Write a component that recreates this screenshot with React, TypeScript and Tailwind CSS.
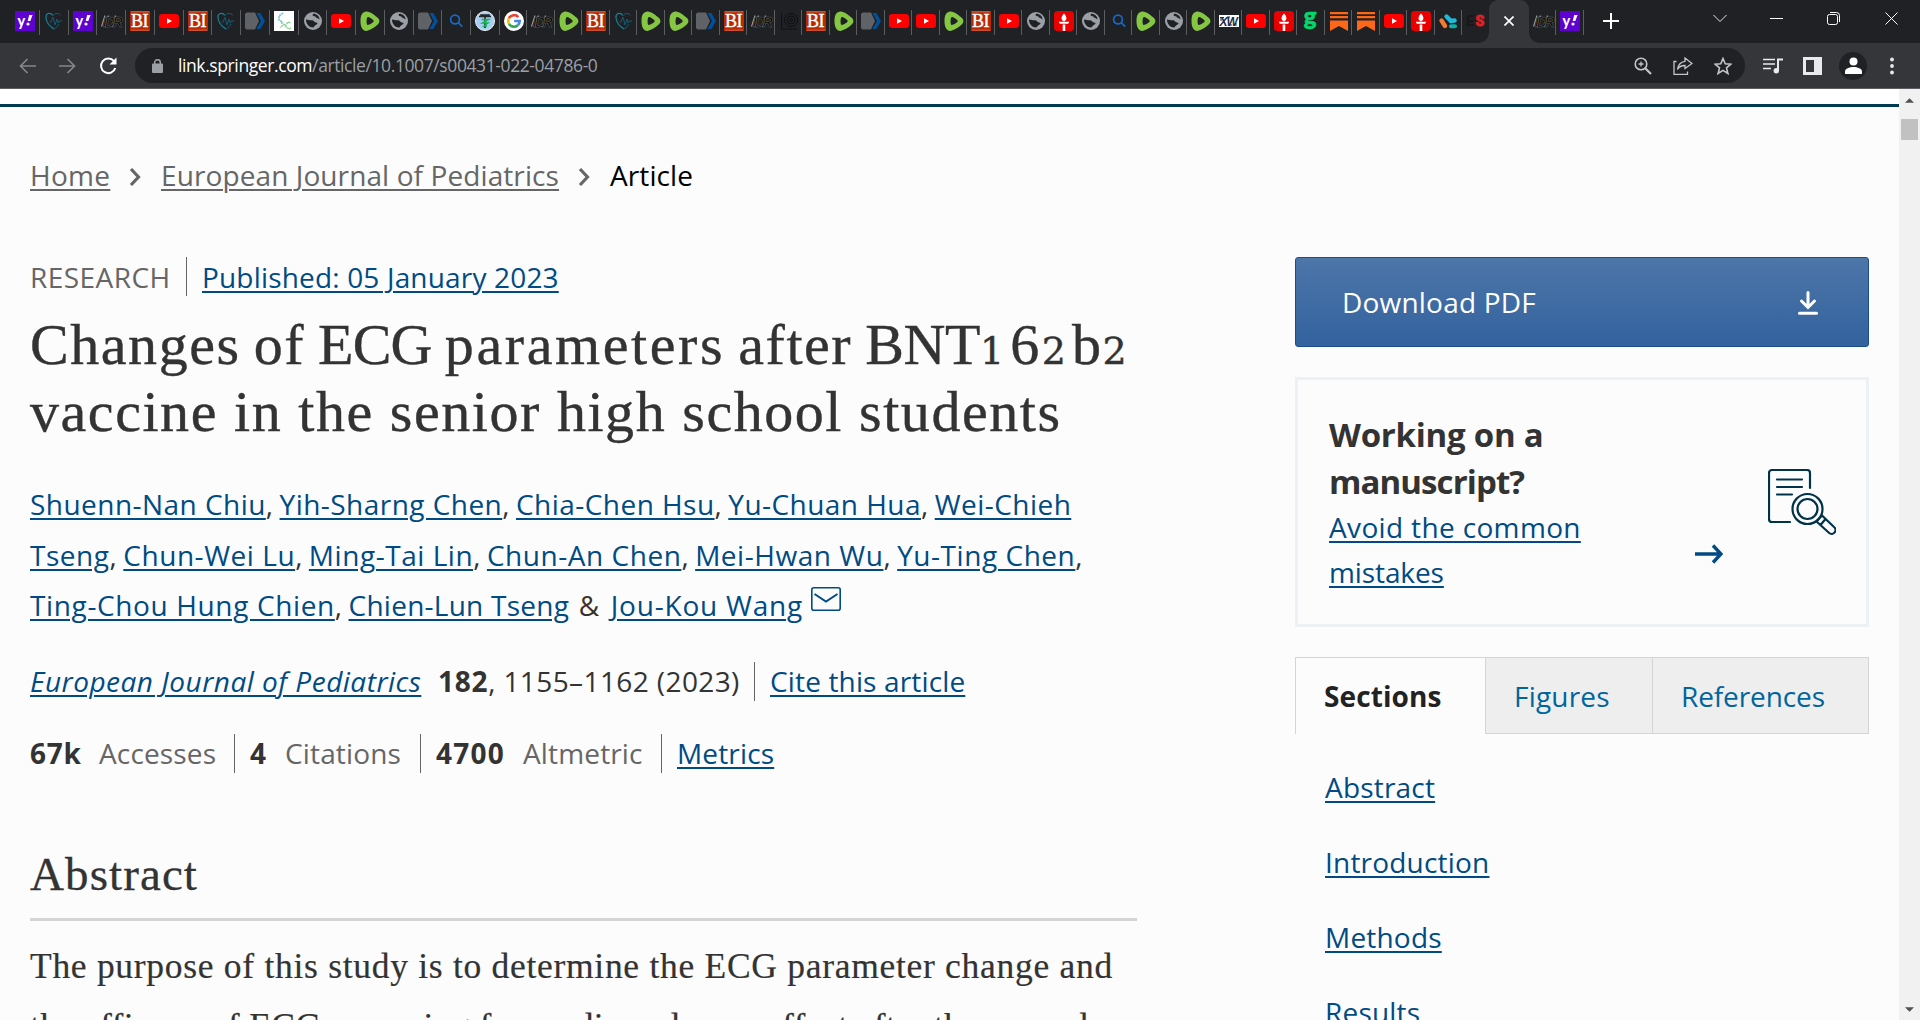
import type { ReactNode } from "react";

type TabIcon =
  | "yahoo" | "heart" | "idr" | "bi" | "youtube" | "tag" | "molecule" | "globe"
  | "rumble" | "search" | "medical" | "google" | "spiral" | "torch" | "jw"
  | "g" | "substack" | "blocks" | "es";

const wideTabs: TabIcon[] = [
  "yahoo", "heart", "yahoo", "idr", "bi", "youtube", "bi", "heart", "tag",
  "molecule", "globe", "youtube", "rumble", "globe", "tag", "search", "medical",
];

const narrowTabs: TabIcon[] = [
  "google", "idr", "rumble", "bi", "heart", "rumble", "rumble", "tag", "bi",
  "idr", "spiral", "bi", "rumble", "tag", "youtube", "youtube", "rumble", "bi",
  "youtube", "globe", "torch", "globe", "search", "rumble", "globe", "rumble",
  "jw", "youtube", "torch", "g", "substack", "substack", "youtube", "torch", "blocks",
];

const authorLines = [
  {
    names: ["Shuenn-Nan Chiu", "Yih-Sharng Chen", "Chia-Chen Hsu", "Yu-Chuan Hua", "Wei-Chieh"],
    tracking: "tracking-[0.46px]",
    end: "",
  },
  {
    names: ["Tseng", "Chun-Wei Lu", "Ming-Tai Lin", "Chun-An Chen", "Mei-Hwan Wu", "Yu-Ting Chen"],
    tracking: "tracking-[0.54px]",
    end: ",",
  },
];

const sections = ["Abstract", "Introduction", "Methods", "Results"];

const icons: Record<TabIcon, ReactNode> = {
  yahoo: (
    <>
      <rect width="20" height="20" fill="#5f01d1" />
      <text x="2.5" y="14.5" fontSize="14.5" fontWeight="900" fontFamily="Lato, sans-serif" fill="#fff">y</text>
      <path d="M14.2 4h3.4l-2.3 6h-2.6z" fill="#fff" />
      <circle cx="13" cy="13" r="1.6" fill="#fff" />
    </>
  ),
  heart: (
    <g fill="none" stroke="#125c74" strokeWidth="1">
      <path d="M9 4.5C6 .5 1.5 2.5 2 7c.4 4.5 4 8.5 8 11" stroke="#1a8099" strokeWidth="1.2" />
      <path d="M9 4.5C11 2 15 1.5 16.5 4.5M10 18c2-1 4-3 5-5" />
      <path d="M5.500 11h1.500l2-5 2 8 2-6 1.200 4 1-2H18" />
    </g>
  ),
  idr: (
    <>
      <path d="M4 4.500L.5 15.500M7.500 4.500L4 15.500M14.500 4.500L11.500 15.500" stroke="#9a9a9a" strokeWidth="1.1" />
      <text x="2" y="15.5" fontSize="14" fontWeight="900" fontStyle="italic" letterSpacing="-2.2" fontFamily="Liberation Sans, sans-serif" fill="#050505" stroke="#6b6b6b" strokeWidth="0.5">IDR</text>
    </>
  ),
  bi: (
    <>
      <rect width="20" height="20" fill="#b92a02" />
      <path d="M1 .8h18M1 19.2h18" stroke="#df7b61" strokeWidth="0.7" />
      <text x="1" y="16" fontSize="18" letterSpacing="-0.4" fontFamily="Liberation Serif, serif" fill="#fff" stroke="#fff" strokeWidth="0.4">BI</text>
    </>
  ),
  youtube: (
    <>
      <rect y="3" width="20" height="14" rx="3.2" fill="#f00" />
      <path d="M8 7.2v5.6l5-2.8z" fill="#fff" />
    </>
  ),
  tag: (
    <>
      <path d="M1.500 1.500h8.500l4 8.500-4 8.500H1.500L0 17V3z" fill="#5f6368" />
      <path d="M11.500 2h3.800l4.700 8-4.700 8h-3.800l4.500-8z" fill="#01509b" />
    </>
  ),
  molecule: (
    <>
      <rect width="20" height="20" fill="#fff" />
      <g fill="none" strokeWidth="1.6" strokeDasharray="2 0.6">
        <path d="M9 2L5 5v4l4 2.500" stroke="#6fc6d6" />
        <path d="M7 11.500l3 2-4 3M11 15l3-4 3 1M11 15l4 3 2-1" stroke="#8ed49a" />
      </g>
    </>
  ),
  globe: (
    <>
      <circle cx="10" cy="10" r="9" fill="#9aa0a6" />
      <path d="M3 8.500c2.500 0 3.500 1 6 .8 2 0 2 2.300 4 2.200 1.500 0 2 .8 1 1.800-1.200 1-2.500 1-3.500 3.200-4 .2-7.500-3.300-7.500-8z" fill="#202124" />
      <path d="M10 2.800c-1 1.300 0 2.500 1.500 2.500 1.400 0 1.200 1.800 2.800 1.800l2.200 1.400C16.500 5.500 14 2.800 10 2.800z" fill="#202124" />
    </>
  ),
  rumble: (
    <>
      <path d="M6 .5c3-.8 9 3.500 12 6.500 2 2 1.800 4.500 0 6.300-3 3-8 6-11.500 6.600C2.500 20 .5 16 .5 10S2 1.500 6 .5z" fill="#85c742" />
      <path d="M7.500 6.200c1-.6 5 2 5.800 3 .5.700.5 1.200 0 1.800-.8 1-4.500 3.300-5.800 2.900-1.200-.5-1.200-7 0-7.700z" fill="#202124" />
    </>
  ),
  search: (
    <g fill="none" stroke="#1769c4" strokeWidth="1.7">
      <circle cx="9" cy="8.500" r="4.400" />
      <path d="M12.200 11.700l4 4" />
    </g>
  ),
  medical: (
    <>
      <circle cx="10" cy="10" r="9.500" fill="#a7cdf4" stroke="#f0f0f0" />
      <path d="M4 5.500h12M6 5V4h8v1M10 5v12" stroke="#262626" strokeWidth="1.7" fill="none" />
      <path d="M6.500 8.500h7l-6 3.500h5.500l-4 3h3" stroke="#12b552" strokeWidth="1.5" fill="none" />
    </>
  ),
  google: (
    <>
      <circle cx="10" cy="10" r="10" fill="#fff" />
      <g fill="none" strokeWidth="2.6">
        <path d="M14.300 6.100A5.700 5.700 0 0 0 5 7.200" stroke="#ea4335" />
        <path d="M5 7.200a5.700 5.700 0 0 0 0 5.600" stroke="#fbbc05" />
        <path d="M5 12.800a5.700 5.700 0 0 0 8.800 1.400" stroke="#34a853" />
        <path d="M13.800 14.200a5.700 5.700 0 0 0 1.900-4.200H10.200" stroke="#4285f4" />
      </g>
    </>
  ),
  spiral: (
    <g fill="none" stroke="#101012" strokeWidth="1">
      <path d="M2.500 2v16H18" />
      <circle cx="12" cy="9" r="6.500" />
      <circle cx="12" cy="9" r="4" />
      <circle cx="12" cy="9" r="1.500" />
    </g>
  ),
  torch: (
    <>
      <rect width="20" height="20" rx="3.500" fill="#e90000" />
      <path d="M10 2.500c3.300 3.500 3.300 6.500 0 8-3.300-1.500-3.300-4.500 0-8zM4.800 10.800h10.400l-1 2H5.800zM8.700 13.500h2.600V20H8.700z" fill="#fff" />
    </>
  ),
  jw: (
    <>
      <rect y="4" width="20" height="12" fill="#fff" />
      <text x="0.5" y="14.5" fontSize="12" fontWeight="900" fontStyle="italic" letterSpacing="-1" fontFamily="Liberation Sans, sans-serif" fill="#14304d">XW</text>
      <path d="M1 6.500h4M8 6h3M2 7v3M12 13v2M17 12v3" stroke="#14304d" strokeWidth="1" />
    </>
  ),
  g: (
    <text x="2.8" y="14" fontSize="24" fontWeight="900" fontFamily="Lato, sans-serif" fill="#02d76d" stroke="#02d76d" strokeWidth="0.6">g</text>
  ),
  substack: (
    <path d="M1 1h18v2.300H1zM1 5h18v2.300H1zM1 9.500h18V20l-9-5-9 5z" fill="#fd6719" />
  ),
  blocks: (
    <g strokeWidth="4.4" strokeLinecap="round">
      <path d="M2.500 9.500l3.500 5.500" stroke="#f37a32" />
      <path d="M7.500 5.500l4.500 4.500" stroke="#22b8d8" />
      <path d="M12 10l3.500-.5" stroke="#22b8d8" />
      <path d="M12 15.200h4" stroke="#09b1a9" strokeWidth="4" />
    </g>
  ),
  es: (
    <>
      <text x="0" y="15" fontSize="14" fontWeight="900" fontFamily="Roboto, sans-serif" fill="#1a1718">E</text>
      <text x="9.5" y="15" fontSize="14" fontWeight="900" fontFamily="Roboto, sans-serif" fill="#de2128" stroke="#de2128" strokeWidth="0.8">S</text>
    </>
  ),
};

function Favicon({ name }: { name: TabIcon }) {
  return (
    <svg viewBox="0 0 20 20" className="size-5 shrink-0 overflow-visible">
      {icons[name]}
    </svg>
  );
}

function Tab({ name, className }: { name: TabIcon; className: string }) {
  return (
    <div className={`flex items-center pl-1 pb-px h-[43px] shrink-0 ${className}`}>
      <Favicon name={name} />
      <span className="ml-auto h-[25px] w-px bg-[#5c5d60] mt-0.5" />
    </div>
  );
}

function TabStrip() {
  return (
    <div className="flex h-[43px] bg-[#202124] pl-[11px] leading-none">
      {wideTabs.map((t, i) => (
        <Tab key={i} name={t} className="w-[28.75px]" />
      ))}
      {narrowTabs.map((t, i) => (
        <Tab key={i} name={t} className="w-[27.5px]" />
      ))}
      <div className="flex items-center pl-1 pb-px w-[27px] shrink-0">
        <Favicon name="es" />
      </div>
      {/* active tab */}
      <div className="relative flex items-center justify-center w-10 shrink-0 rounded-t-[9px] bg-[#35363a]">
        <span className="absolute -left-2.5 bottom-0 size-2.5 bg-[radial-gradient(circle_at_0_0,#202124_9.5px,#35363a_10px)]" />
        <span className="absolute -right-2.5 bottom-0 size-2.5 bg-[radial-gradient(circle_at_100%_0,#202124_9.5px,#35363a_10px)]" />
        <svg viewBox="0 0 10 10" className="size-[10px] mb-px">
          <path d="M.5.5l9 9M9.500.5l-9 9" stroke="#fff" strokeWidth="1.7" />
        </svg>
      </div>
      <Tab name="idr" className="w-[27px]" />
      <Tab name="yahoo" className="w-7" />
      <svg viewBox="0 0 16 16" className="size-4 ml-[19px] mt-[13px]">
        <path d="M8 0v16M0 8h16" stroke="#fff" strokeWidth="2" />
      </svg>
      <div className="ml-auto flex items-start pr-[22px]">
        <svg viewBox="0 0 14 14" className="size-3.5 mt-3 mr-[43px]">
          <path d="M.5 3l6.500 6.500L13.500 3" fill="none" stroke="#e8e8e8" />
        </svg>
        <span className="w-[13px] h-px bg-white mt-[18px] mr-11" />
        <svg viewBox="0 0 13 13" className="size-[13px] mt-3 mr-[45px]" fill="none" stroke="#fff">
          <rect x=".5" y="2.500" width="10" height="10" rx="2" />
          <path d="M3 .5h6.500a3 3 0 0 1 3 3V10" />
        </svg>
        <svg viewBox="0 0 13 13" className="size-[13px] mt-3">
          <path d="M.5.5l12 12M12.500.5l-12 12" stroke="#fff" />
        </svg>
      </div>
    </div>
  );
}

function Toolbar() {
  return (
    <div className="flex items-center h-[46px] bg-[#35363a] border-b border-[#5d5e61] pl-[19px] pr-[21px]">
      <svg viewBox="0 0 17 16" className="w-[17px] h-4 mr-[23px]" fill="none" stroke="#85868a" strokeWidth="1.7">
        <path d="M17 8H1.500M8.500 1l-7 7 7 7" />
      </svg>
      <svg viewBox="0 0 17 16" className="w-[17px] h-4 mr-[23px]" fill="none" stroke="#85868a" strokeWidth="1.7">
        <path d="M0 8h15.500M8.500 1l7 7-7 7" />
      </svg>
      <svg viewBox="0 0 18 18" className="size-[18px]">
        <path d="M15 4.200A7.300 7.300 0 1 0 16.300 11" fill="none" stroke="#fff" strokeWidth="2" />
        <path d="M17.500.5v7h-7z" fill="#fff" />
      </svg>
      <div className="flex items-center ml-[18px] w-[1610px] h-[35px] rounded-full bg-[#202124] pl-[17px] pr-[13px]">
        <svg viewBox="0 0 11 14" className="w-[11px] h-3.5 mr-[15px]">
          <rect y="4.500" width="11" height="9.500" rx="1" fill="#9aa0a6" />
          <path d="M2.700 5V3.500a2.800 2.800 0 0 1 5.600 0V5" fill="none" stroke="#9aa0a6" strokeWidth="1.5" />
        </svg>
        <span className="text-[17.5px] leading-[35px] tracking-[-0.4px] text-[#9aa0a6] whitespace-nowrap">
          <span className="text-white">link.springer.com</span>/article/10.1007/s00431-022-04786-0
        </span>
        <div className="ml-auto flex items-center">
          <svg viewBox="0 0 18 18" className="size-[18px] mr-[21px]" fill="none" stroke="#c4c5c8" strokeWidth="1.6">
            <circle cx="7" cy="7" r="5.800" />
            <path d="M11.500 11.500l5.500 5.500" strokeWidth="2.2" />
            <path d="M7 4.500v5M4.500 7h5" strokeWidth="1.3" />
          </svg>
          <svg viewBox="0 0 20 18" className="w-5 h-[18px] mr-[21px]" fill="none" stroke="#c4c5c8" strokeWidth="1.3">
            <path d="M3.500 4.500H1v13h13.500v-3" />
            <path d="M12 1l7 5.500-7 5V8.500c-4 0-6 1-7.500 4C5 7.500 7.500 5 12 4.300z" />
          </svg>
          <svg viewBox="0 0 18 18" className="size-[18px]">
            <path d="M9 1.500l2.200 5.300 5.700.4-4.400 3.700 1.400 5.600L9 13.400l-4.900 3.100 1.400-5.600L1.100 7.200l5.700-.4z" fill="none" stroke="#c4c5c8" strokeWidth="1.6" />
          </svg>
        </div>
      </div>
      <svg viewBox="0 0 20 16" className="w-5 h-4 ml-[18px]">
        <path d="M0 1.500h12M0 6h12M0 10.500h8" stroke="#e8eaed" strokeWidth="1.6" />
        <path d="M15 13V1.500h5" stroke="#e8eaed" strokeWidth="2" fill="none" />
        <circle cx="13.300" cy="12.800" r="2.700" fill="#e8eaed" />
      </svg>
      <svg viewBox="0 0 19 18" className="w-[19px] h-[18px] ml-5">
        <path fillRule="evenodd" d="M0 0h19v18H0zM3 3v12h8V3z" fill="#e8eaed" />
      </svg>
      <div className="ml-[17px] size-7 rounded-full bg-[#202124] flex items-center justify-center">
        <svg viewBox="0 0 17 17" className="size-[17px]" fill="#fff">
          <circle cx="8.500" cy="4.500" r="4" />
          <path d="M0 17v-2.500C0 11.500 4.500 10 8.500 10s8.500 1.500 8.500 4.500V17z" />
        </svg>
      </div>
      <svg viewBox="0 0 4 18" className="w-1 h-[18px] ml-[23px]" fill="#e8eaed">
        <circle cx="2" cy="2.500" r="1.900" />
        <circle cx="2" cy="9" r="1.900" />
        <circle cx="2" cy="15.500" r="1.900" />
      </svg>
    </div>
  );
}

function Link({ children, className = "" }: { children: ReactNode; className?: string }) {
  return (
    <a className={`text-[#004b83] underline decoration-2 underline-offset-[3px] ${className}`}>{children}</a>
  );
}

function Chevron() {
  return (
    <svg viewBox="0 0 12 20" className="w-3 h-5 mt-1 mr-0.5">
      <path d="M2 2l7.500 8L2 18" fill="none" stroke="#666" strokeWidth="3.2" />
    </svg>
  );
}

function Divider() {
  return <span className="w-px h-[39px] bg-[#666]" />;
}

// old-style figure sitting at x-height
function LowDigit({ children }: { children: ReactNode }) {
  return <span className="font-['DejaVu_Serif',serif] text-[38px] leading-none tracking-[6px]">{children}</span>;
}

function Article() {
  return (
    <div className="w-[1107px] shrink-0">
      <nav className="mt-[49px] flex items-center h-[38px] text-[#666] tracking-[0.1px] whitespace-nowrap">
        <span className="w-20 underline decoration-2 underline-offset-[3px] tracking-[0.3px]">Home</span>
        <span className="w-[51px] flex justify-center"><Chevron /></span>
        <span className="w-[398px] underline decoration-2 underline-offset-[3px]">European Journal of Pediatrics</span>
        <span className="w-[51px] flex justify-center"><Chevron /></span>
        <span className="text-black">Article</span>
      </nav>

      <div className="mt-[63px] flex items-center h-[39px] tracking-[0.17px]">
        <span className="w-[156px] text-[#666] tracking-[0.45px]">RESEARCH</span>
        <Divider />
        <Link className="ml-[15px]">Published: 05 January 2023</Link>
      </div>

      <h1 className="mt-[15px] font-['Liberation_Serif',serif] text-[58px] leading-[67px] text-[#333] tracking-[1.55px] whitespace-nowrap [-webkit-text-stroke:0.4px_#333]">
        <span className="[word-spacing:-3px]">
          Changes of <span className="tracking-[-0.8px]">ECG</span>{" "}
          <span className="tracking-[2.6px]">parameters</span> after{" "}
          <span className="tracking-[-0.4px]">BNT</span>
          <LowDigit>1</LowDigit>
          <span className="tracking-[2.5px]">6</span>
          <LowDigit>2</LowDigit>b<LowDigit>2</LowDigit>
        </span>
        <br />
        vaccine in the senior high school students
      </h1>

      <div className="mt-[34px] leading-[50.5px] text-[#333] tracking-[-0.4px] whitespace-nowrap">
        {authorLines.map((line) => (
          <div key={line.names[0]}>
            {line.names.map((n, i) => (
              <span key={n}>
                {i > 0 && ", "}
                <Link className={line.tracking}>{n}</Link>
              </span>
            ))}
            {line.end}
          </div>
        ))}
        <div className="flex">
          <span>
            <Link className="tracking-[0.63px]">Ting-Chou Hung Chien</Link>,{" "}
            <Link className="tracking-[0.25px]">Chien-Lun Tseng</Link>
            <span className="tracking-[2.2px]"> &amp; </span>
            <Link className="tracking-[0.8px]">Jou-Kou Wang</Link>
          </span>
          <svg viewBox="0 0 30 24" className="w-[30px] h-6 ml-2 mt-[7px]" fill="none" stroke="#004b83">
            <rect x=".8" y=".8" width="28.400" height="22.400" rx="2" strokeWidth="1.6" />
            <path d="M3.500 7L15 14.500 26.500 7" strokeWidth="2" />
          </svg>
        </div>
      </div>

      <div className="mt-[31px] flex items-center h-[39px] text-[#333] tracking-[0.4px] whitespace-nowrap">
        <span className="w-[408px]"><Link className="italic tracking-[0.5px]">European Journal of Pediatrics</Link></span>
        <span className="w-[316px]"><b className="tracking-[0.7px]">182</b>, 1155–1162 (2023)</span>
        <Divider />
        <Link className="ml-[15px] tracking-[0.15px]">Cite this article</Link>
      </div>

      <div className="mt-[33px] flex items-center h-[39px] text-[#666] tracking-[0.15px]">
        <b className="w-[69px] text-[#333] tracking-[0.7px]">67k</b>
        <span className="w-[135px]">Accesses</span>
        <Divider />
        <b className="ml-[15px] w-[35px] text-[#333]">4</b>
        <span className="w-[135px]">Citations</span>
        <Divider />
        <b className="ml-[15px] w-[87px] text-[#333] tracking-[1.2px]">4700</b>
        <span className="w-[138px]">Altmetric</span>
        <Divider />
        <Link className="ml-[15px]">Metrics</Link>
      </div>

      <h2 className="mt-[73px] pb-4 border-b-[3px] border-[#d5d5d5] font-['Liberation_Serif',serif] text-[47px] leading-[56px] tracking-[1.1px] text-[#333] [-webkit-text-stroke:0.3px_#333]">
        Abstract
      </h2>
      <p className="mt-[15px] font-['Liberation_Serif',serif] text-[35.5px] leading-[60.5px] tracking-[0.71px] text-[#333] whitespace-nowrap [-webkit-text-stroke:0.2px_#333]">
        The purpose of this study is to determine the ECG parameter change and
        <br />
        <span className="tracking-[0.38px]">
          the efficacy of ECG screening for cardiac adverse effect after the second
        </span>
      </p>
    </div>
  );
}

function Sidebar() {
  return (
    <aside className="w-[574px] mt-[150px]">
      <div className="flex items-center h-[90px] pl-[46px] pr-[50px] rounded-[3px] border border-[#1c4e8c] bg-linear-to-b from-[#4d76a9] to-[#33629e] text-white">
        <span className="tracking-[0.2px]">Download PDF</span>
        <svg viewBox="0 0 20 24" className="w-5 h-6 ml-auto mt-0.5" fill="none" stroke="#fff" strokeLinecap="round">
          <path d="M10 1.500v14M3.500 10l6.500 6.500 6.500-6.500" strokeWidth="3" />
          <path d="M1.500 22.300h17" strokeWidth="3" />
        </svg>
      </div>

      <div className="mt-[30px] flex h-[250px] border-[3px] border-[#ebf1f5] pl-[31px] pt-[31px]">
        <div className="w-[366px]">
          <h3 className="font-bold text-[33px] leading-[47px] tracking-[-0.25px] text-[#333]">
            Working on a<br /><span className="tracking-[-0.9px]">manuscript?</span>
          </h3>
          <p className="leading-[45px]">
            <Link><span className="tracking-[0.35px]">Avoid the common</span><br /><span className="tracking-[-0.1px]">mistakes</span></Link>
          </p>
        </div>
        <svg viewBox="0 0 28 20" className="w-7 h-5 mt-[133px]" fill="none" stroke="#004b83" strokeWidth="3.4">
          <path d="M0 10h26M18 1.500l8 8.500-8 8.500" />
        </svg>
        <svg viewBox="0 0 68 66" className="w-[68px] h-[66px] ml-[45px] mt-[58px]" fill="none" stroke="#01324b" strokeWidth="2.2" strokeLinecap="round">
          <path d="M42 19V4a3 3 0 0 0-3-3H4a3 3 0 0 0-3 3v46a3 3 0 0 0 3 3h18" />
          <path d="M9 10.500h25M9 18h25M9 25.500h15" />
          <circle cx="39.500" cy="40" r="15" />
          <circle cx="39.500" cy="40" r="10" />
          <path d="M51 49.500l3-3 12 11.500a3.500 3.500 0 0 1-4.800 6L48.500 52.500zM52.500 56l5-6" />
        </svg>
      </div>

      <div className="mt-[30px] flex h-[77px] leading-[77px] border-t border-x border-[#d5d5d5] tracking-[0.1px]">
        <span className="w-[189px] pl-[28px] font-bold text-[#222]">Sections</span>
        <span className="w-[167px] h-[76px] pl-[28px] bg-[#eee] border-l border-b border-[#d5d5d5] text-[#01659c] tracking-[0.2px]">Figures</span>
        <span className="flex-1 h-[76px] pl-[28px] bg-[#eee] border-l border-b border-[#d5d5d5] text-[#01659c] tracking-[-0.1px]">References</span>
      </div>
      <ul className="mt-[31px] pl-[30px] flex flex-col gap-[30px] leading-[45px] tracking-[0.2px]">
        {sections.map((s) => (
          <li key={s}><Link>{s}</Link></li>
        ))}
      </ul>
    </aside>
  );
}

export default function App() {
  return (
    <div className="w-[1920px] h-[1020px] overflow-hidden flex flex-col font-['Open_Sans','Noto_Sans',sans-serif] text-[28px]">
      <TabStrip />
      <Toolbar />
      <div className="flex flex-1 min-h-0">
        <main className="flex-1 overflow-hidden bg-[#fcfcfc]">
          <div className="h-[18px] bg-white border-b-[3px] border-[#013b4f]" />
          <div className="flex pl-[30px] gap-[158px]">
            <Article />
            <Sidebar />
          </div>
        </main>
        <div className="w-[21px] bg-[#f1f1f1] flex flex-col items-center">
          <svg viewBox="0 0 10 5" className="w-[9px] h-[5px] mt-[9px]"><path d="M0 5l5-5 5 5z" fill="#505050" /></svg>
          <div className="mt-4 w-[17px] h-[21px] bg-[#c1c1c1]" />
          <svg viewBox="0 0 10 5" className="w-[9px] h-[5px] mt-auto mb-2"><path d="M0 0h10L5 5z" fill="#505050" /></svg>
        </div>
      </div>
    </div>
  );
}
